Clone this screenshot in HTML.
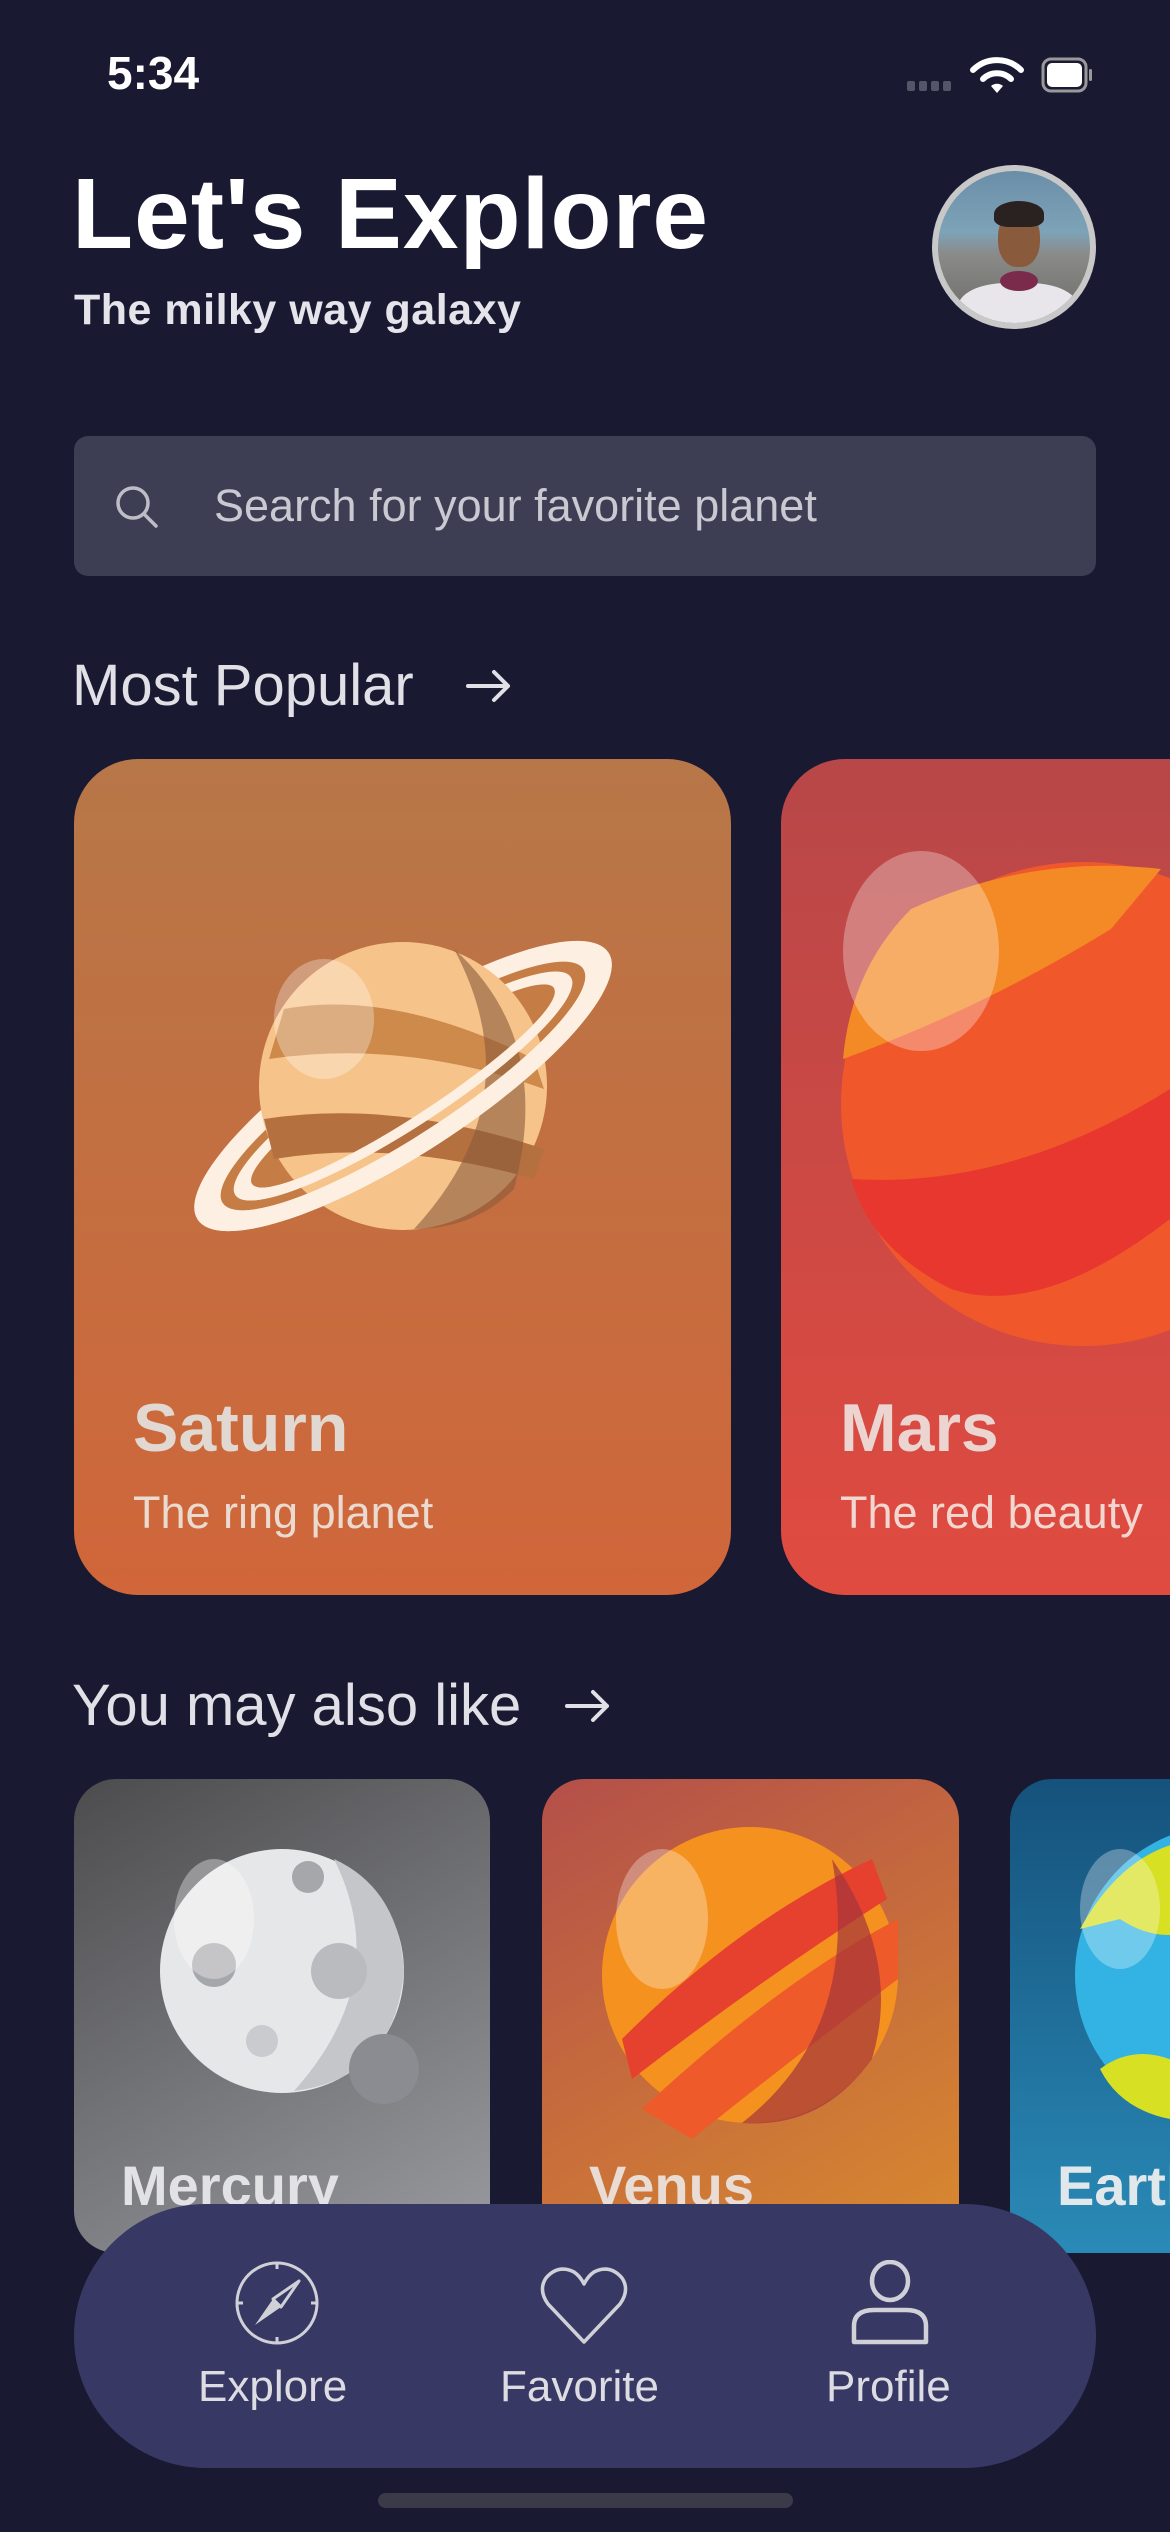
<!DOCTYPE html>
<html><head><meta charset="utf-8"><style>
*{margin:0;padding:0;box-sizing:border-box}
html,body{width:1170px;height:2532px;overflow:hidden}
body{background:#191932;font-family:"Liberation Sans",sans-serif;position:relative;color:#fff}
.abs{position:absolute}
.card{position:absolute;overflow:hidden}
.t{position:absolute;white-space:nowrap}
</style></head><body>
<div class="t" style="left:107px;top:46px;font-size:46px;font-weight:bold;">5:34</div>
<svg class="abs" style="left:905px;top:52px" width="210" height="44" viewBox="0 0 210 44">
<g fill="#55556a"><rect x="2" y="29" width="8" height="10" rx="2"/><rect x="14" y="29" width="8" height="10" rx="2"/><rect x="26" y="29" width="8" height="10" rx="2"/><rect x="38" y="29" width="8" height="10" rx="2"/></g>
<path d="M68 18 A34 34 0 0 1 116 18" stroke="#fff" stroke-width="6" fill="none" stroke-linecap="round"/>
<path d="M78 27 A20 20 0 0 1 106 27" stroke="#fff" stroke-width="6" fill="none" stroke-linecap="round"/>
<path d="M86 34 L92 41 L98 34 A9 9 0 0 0 86 34Z" fill="#fff"/>
<rect x="138" y="7" width="43" height="32" rx="8" fill="none" stroke="#999" stroke-width="3"/>
<rect x="142" y="11" width="35" height="24" rx="5" fill="#fff"/>
<rect x="184" y="17" width="3" height="12" rx="1.5" fill="#999"/>
</svg>
<div class="t" style="left:72px;top:156px;font-size:100px;font-weight:bold;letter-spacing:1px;line-height:116px">Let's Explore</div>
<div class="t" style="left:74px;top:285px;font-size:43px;font-weight:bold;color:#e4e4ea;line-height:50px;letter-spacing:0.5px">The milky way galaxy</div>
<div class="abs" style="left:932px;top:165px;width:164px;height:164px;border-radius:50%;background:#c8c8c8;padding:6px">
<div style="width:100%;height:100%;border-radius:50%;overflow:hidden;position:relative;background:linear-gradient(#6a8ea8 0%,#7da3b8 40%,#8a8a88 55%,#6a6a66 100%)">
<div class="abs" style="left:60px;top:40px;width:42px;height:56px;border-radius:45%;background:#8a5a3c"></div>
<div class="abs" style="left:56px;top:30px;width:50px;height:26px;border-radius:50% 50% 30% 30%;background:#2a2220"></div>
<div class="abs" style="left:20px;top:112px;width:120px;height:60px;border-radius:40% 40% 0 0;background:#e8e6ea"></div>
<div class="abs" style="left:62px;top:100px;width:38px;height:20px;border-radius:50%;background:#7a2a4a"></div>
</div></div>
<div class="abs" style="left:74px;top:436px;width:1022px;height:140px;border-radius:14px;background:#3d3d54"></div>
<svg class="abs" style="left:114px;top:484px" width="46" height="46" viewBox="0 0 46 46"><circle cx="19" cy="19" r="15" stroke="#bdbdc6" stroke-width="3.5" fill="none"/><path d="M30 30 L42 42" stroke="#bdbdc6" stroke-width="3.5" stroke-linecap="round"/></svg>
<div class="t" style="left:214px;top:478px;font-size:45px;color:#c9c9d2;line-height:56px">Search for your favorite planet</div>
<div class="t" style="left:72px;top:652px;font-size:58px;color:#e0e0e6;font-weight:300;line-height:68px">Most Popular</div>
<svg class="abs" style="left:464px;top:668px" width="50" height="36" viewBox="0 0 50 36"><path d="M4 18 H44 M30 4 L44 18 L30 32" stroke="#e0e0e6" stroke-width="4" fill="none" stroke-linecap="round" stroke-linejoin="round"/></svg>

<div class="card" style="left:74px;top:759px;width:657px;height:836px;border-radius:64px;background:linear-gradient(#b77748,#d0663a)">
<svg class="abs" style="left:0;top:0" width="657" height="836">
<g transform="translate(329,327) rotate(-33)">
<ellipse cx="0" cy="0" rx="245" ry="68" fill="#fdf0e2"/>
<ellipse cx="0" cy="0" rx="215" ry="50" fill="#c67d45"/>
<ellipse cx="0" cy="0" rx="200" ry="42" fill="#fdf0e2"/>
<ellipse cx="0" cy="0" rx="180" ry="32" fill="#c67d45"/>
</g>
<circle cx="329" cy="327" r="144" fill="#f6c48a"/>
<path d="M210 250 Q320 230 460 300 L470 330 Q330 280 195 300Z" fill="#cd8a4a"/>
<path d="M190 360 Q320 340 470 390 L460 420 Q320 380 200 400Z" fill="#b57040"/>
<path d="M380 190 Q480 280 440 430 Q400 470 340 470 Q460 340 380 190Z" fill="#8a5a3a" opacity=".6"/>
<ellipse cx="250" cy="260" rx="50" ry="60" fill="#fff" opacity=".3"/>
<g transform="translate(329,327) rotate(-33)"><path d="M-245 0 A245 68 0 0 0 245 0 L215 0 A215 50 0 0 1 -215 0Z" fill="#fdf0e2"/><path d="M-200 0 A200 42 0 0 0 200 0 L180 0 A180 32 0 0 1 -180 0Z" fill="#fdf0e2"/></g>
</svg>
<div class="t" style="left:59px;top:630px;font-size:68px;font-weight:bold;color:#e2d8d2">Saturn</div>
<div class="t" style="left:59px;top:728px;font-size:45px;color:#eadad0">The ring planet</div>
</div>
<div class="card" style="left:781px;top:759px;width:389px;height:836px;border-radius:64px 0 0 64px;background:linear-gradient(#b84748,#e04b40)">
<svg class="abs" style="left:0;top:0" width="389" height="836">
<circle cx="302" cy="345" r="242" fill="#f0582c"/>
<path d="M62 300 Q200 250 330 170 L380 110 Q250 95 130 150 Q70 210 62 300Z" fill="#f48a25"/>
<path d="M70 420 Q230 430 389 330 L389 460 Q260 560 170 530 Q90 490 70 420Z" fill="#e8372e"/>
<ellipse cx="140" cy="192" rx="78" ry="100" fill="#fff" opacity=".3"/>
</svg>
<div class="t" style="left:59px;top:630px;font-size:68px;font-weight:bold;color:#ecd4d0">Mars</div>
<div class="t" style="left:59px;top:728px;font-size:45px;color:#f2d6d0">The red beauty</div>
</div>

<div class="t" style="left:72px;top:1672px;font-size:58px;color:#e0e0e6;font-weight:300;line-height:68px">You may also like</div>
<svg class="abs" style="left:563px;top:1688px" width="50" height="36" viewBox="0 0 50 36"><path d="M4 18 H44 M30 4 L44 18 L30 32" stroke="#e0e0e6" stroke-width="4" fill="none" stroke-linecap="round" stroke-linejoin="round"/></svg>

<div class="card" style="left:74px;top:1779px;width:416px;height:474px;border-radius:42px;background:linear-gradient(150deg,#4c4c4e,#9a9ba0)">
<svg class="abs" width="416" height="474"><circle cx="208" cy="192" r="122" fill="#e6e7e9"/><path d="M260 80 Q320 200 220 312 Q320 300 330 192 Q325 110 260 80Z" fill="#c4c6ca"/><circle cx="140" cy="186" r="22" fill="#a6a7ab"/><circle cx="234" cy="98" r="16" fill="#a6a7ab"/><circle cx="265" cy="192" r="28" fill="#b9bbbf"/><circle cx="310" cy="290" r="35" fill="#8a8c92"/><circle cx="188" cy="262" r="16" fill="#cacbce"/><ellipse cx="140" cy="140" rx="40" ry="60" fill="#fff" opacity=".35"/></svg>
<div class="t" style="left:47px;top:374px;font-size:56px;font-weight:bold;color:#e2e2e4">Mercury</div>
</div>
<div class="card" style="left:542px;top:1779px;width:417px;height:474px;border-radius:42px;background:linear-gradient(150deg,#b44f4a,#d98a2e)">
<svg class="abs" width="417" height="474"><circle cx="208" cy="196" r="148" fill="#f5921f"/><path d="M80 260 Q200 140 330 80 L345 120 Q220 200 90 300Z" fill="#e6402f"/><path d="M100 330 Q240 200 356 140 L356 200 Q250 280 150 360Z" fill="#ee5a2a"/><path d="M290 80 Q360 180 330 280 Q280 350 200 344 Q320 250 290 80Z" fill="#a3353a" opacity=".7"/><ellipse cx="120" cy="140" rx="46" ry="70" fill="#fff" opacity=".3"/></svg>
<div class="t" style="left:47px;top:374px;font-size:56px;font-weight:bold;color:#e8dcd4">Venus</div>
</div>
<div class="card" style="left:1010px;top:1779px;width:160px;height:474px;border-radius:42px 0 0 42px;background:linear-gradient(#15527c,#2a8ab7)">
<svg class="abs" width="160" height="474"><circle cx="215" cy="196" r="150" fill="#33b3e3"/><path d="M70 150 Q120 60 200 60 L230 120 Q170 180 110 140Z" fill="#d7e023"/><path d="M90 290 Q130 260 180 290 L160 340 Q110 330 90 290Z" fill="#d7e023"/><ellipse cx="110" cy="130" rx="40" ry="60" fill="#fff" opacity=".3"/></svg>
<div class="t" style="left:47px;top:374px;font-size:56px;font-weight:bold;color:#e0e8ec">Earth</div>
</div>

<div class="abs" style="left:74px;top:2204px;width:1022px;height:264px;border-radius:132px;background:#383864"></div>
<svg class="abs" style="left:232px;top:2258px" width="90" height="90" viewBox="0 0 90 90"><circle cx="45" cy="45" r="40" stroke="#d0d0d8" stroke-width="3" fill="none"/><path d="M45 5 v6 M45 79 v6 M5 45 h6 M79 45 h6" stroke="#d0d0d8" stroke-width="3"/><path d="M67 23 L49 49 L41 41Z" fill="none" stroke="#d0d0d8" stroke-width="3" stroke-linejoin="round"/><path d="M41 41 L23 67 L49 49Z" fill="#d0d0d8"/></svg>
<svg class="abs" style="left:538px;top:2266px" width="92" height="80" viewBox="0 0 92 80"><path d="M46 76 L10 38 Q0 24 8 12 Q20 -2 36 6 Q42 10 46 18 Q50 10 56 6 Q72 -2 84 12 Q92 24 82 38Z" fill="none" stroke="#d0d0d8" stroke-width="3.5" stroke-linejoin="round"/></svg>
<svg class="abs" style="left:850px;top:2260px" width="80" height="86" viewBox="0 0 80 86"><ellipse cx="40" cy="21" rx="18" ry="19" fill="none" stroke="#d0d0d8" stroke-width="4.5"/><path d="M4 82 V66 Q4 50 24 50 H56 Q76 50 76 66 V82Z" fill="none" stroke="#d0d0d8" stroke-width="4.5" stroke-linejoin="round"/></svg>
<div class="t" style="left:198px;top:2362px;font-size:44px;color:#dcdce2">Explore</div>
<div class="t" style="left:500px;top:2362px;font-size:44px;color:#dcdce2">Favorite</div>
<div class="t" style="left:826px;top:2362px;font-size:44px;color:#dcdce2">Profile</div>
<div class="abs" style="left:378px;top:2493px;width:415px;height:15px;border-radius:8px;background:#3a3a48"></div>
</body></html>
